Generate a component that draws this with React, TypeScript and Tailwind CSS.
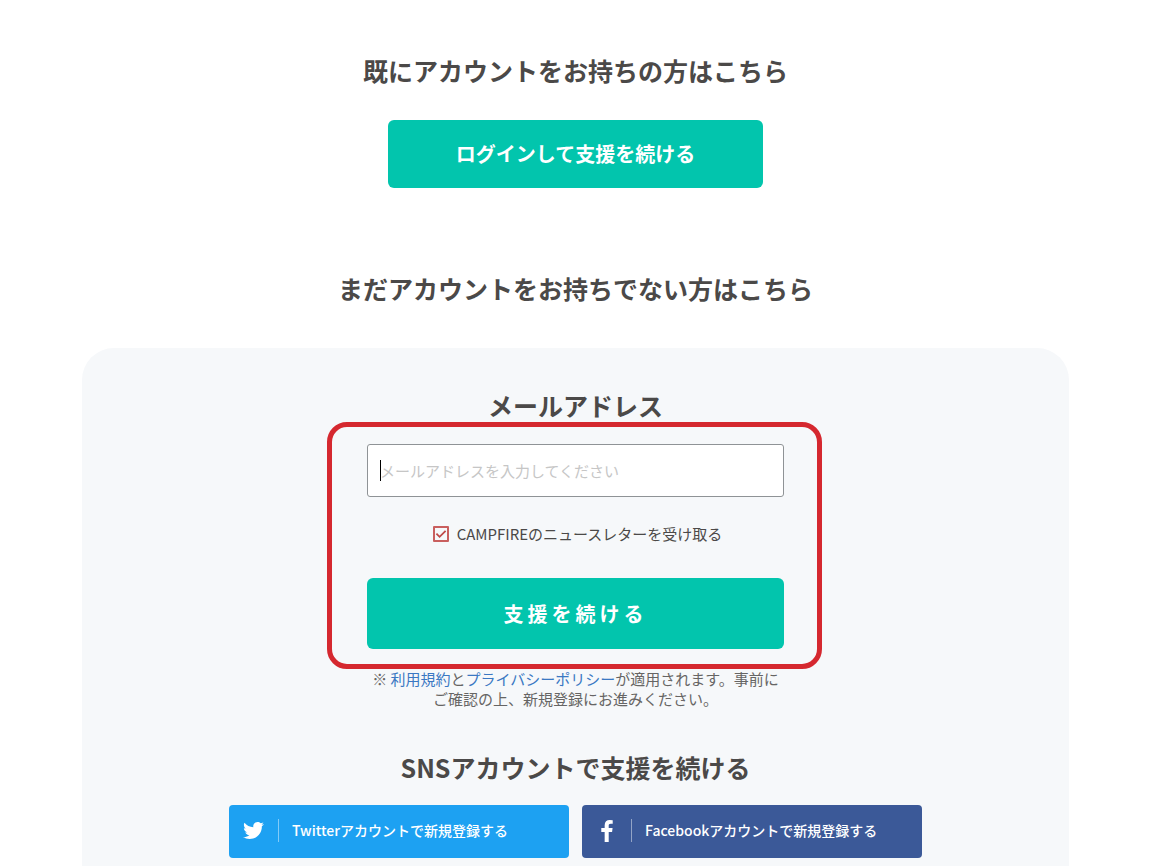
import type { ReactNode } from "react";
import { FaTwitter } from "react-icons/fa";

function Heading({ children }: { children: ReactNode }) {
  return (
    <h2 className="pb-1 text-center text-[25px] leading-[26px] font-bold text-[#4b4948]">
      {children}
    </h2>
  );
}

function FacebookIcon() {
  return (
    <svg viewBox="479 0 864 1664" className="h-[22px] w-3" fill="currentColor">
      <path d="M1343 12v264h-157q-86 0-116 36t-30 108v189h293l-39 296h-254v759h-306v-759h-255v-296h255v-218q0-186 104-288.5t277-102.5q147 0 228 12z" />
    </svg>
  );
}

function SocialButton({
  icon,
  label,
  color,
}: {
  icon: ReactNode;
  label: string;
  color: string;
}) {
  return (
    <button
      type="button"
      className={`flex h-[53px] w-full max-w-[340px] items-center rounded pb-0.5 text-sm font-medium text-white ${color}`}
    >
      <span className="flex w-[49px] justify-center">{icon}</span>
      <span className="h-[23px] w-px bg-white/45" />
      <span className="pb-0.5 pl-[13px]">{label}</span>
    </button>
  );
}

function NewsletterOption() {
  return (
    <label className="mt-[27px] flex items-center justify-center gap-2 pl-1 text-[15px] leading-5 text-[#4b4948]">
      <span className="relative flex">
        <input
          type="checkbox"
          defaultChecked
          className="peer size-4 appearance-none rounded-[1px] border-2 border-[#c95f5e]"
        />
        <svg
          viewBox="0 0 16 16"
          className="pointer-events-none absolute inset-0 hidden size-4 peer-checked:block"
          fill="none"
          stroke="#bf4a48"
          strokeWidth="1.8"
        >
          <path d="M3.4 7.6 6.6 10.8 12.6 4.8" />
        </svg>
      </span>
      CAMPFIREのニュースレターを受け取る
    </label>
  );
}

export default function App() {
  return (
    <main className="flex min-h-screen flex-col items-center bg-white pt-[57px] pr-[19px] font-['Noto_Sans_CJK_JP',sans-serif]">
      <Heading>既にアカウントをお持ちの方はこちら</Heading>
      <button
        type="button"
        className="mt-[33px] h-[68px] w-full max-w-[375px] rounded-md bg-[#02c5ad] text-xl font-bold text-white"
      >
        ログインして支援を続ける
      </button>

      <div className="mt-[87px]">
        <Heading>まだアカウントをお持ちでない方はこちら</Heading>
      </div>

      <section className="mt-[43px] flex w-full max-w-[987px] flex-1 flex-col items-center rounded-t-[32px] bg-[#f6f8fa] pt-11 pb-2">
        <Heading>
          <label htmlFor="email">メールアドレス</label>
        </Heading>

        <form
          onSubmit={(e) => e.preventDefault()}
          className="mr-0.5 w-full max-w-[495px] rounded-[20px] border-5 border-[#d5282f] pt-[17px] pr-[33px] pb-[15px] pl-[35px]"
        >
          <div className="relative">
            <input
              id="email"
              type="email"
              placeholder="メールアドレスを入力してください"
              className="block h-[53px] w-full rounded-[3px] border border-[#8f9396] bg-white px-3 text-[15px] text-[#4b4948] outline-none placeholder:text-[#c6c6c6]"
            />
            <span className="absolute top-4 left-[13px] h-[21px] w-px bg-black" />
          </div>
          <NewsletterOption />
          <button
            type="submit"
            className="mt-[34px] block h-[71px] w-full rounded-md bg-[#02c5ad] text-xl font-bold tracking-[4px] text-white"
          >
            支援を続ける
          </button>
        </form>

        <p className="w-full max-w-[417px] text-center text-[15px] leading-5 text-[#666564]">
          ※{" "}
          <a href="#terms" className="text-[#3b78c3]">
            利用規約
          </a>
          と
          <a href="#privacy" className="text-[#3b78c3]">
            プライバシーポリシー
          </a>
          が適用されます。事前にご確認の上、新規登録にお進みください。
        </p>

        <div className="mt-[45px]">
          <Heading>SNSアカウントで支援を続ける</Heading>
        </div>
        <div className="mt-[21px] flex w-full justify-center gap-[13px]">
          <SocialButton
            icon={<FaTwitter className="size-[21px]" />}
            label="Twitterアカウントで新規登録する"
            color="bg-[#1da1f2]"
          />
          <SocialButton
            icon={<FacebookIcon />}
            label="Facebookアカウントで新規登録する"
            color="bg-[#3b5998]"
          />
        </div>
      </section>
    </main>
  );
}
